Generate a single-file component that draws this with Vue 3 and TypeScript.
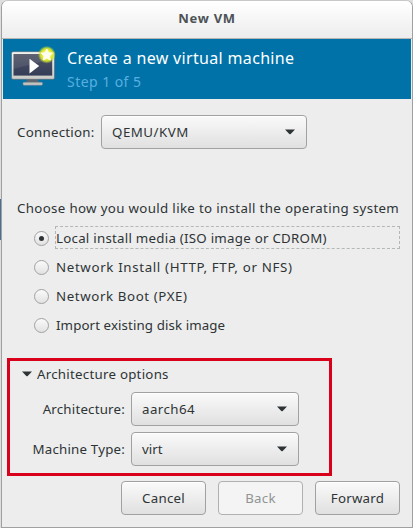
<template>
    <div class="desktop">
        <div class="window">
            <div class="titlebar"><span class="window-title">New VM</span></div>
            <div class="banner">
                <svg class="banner-icon" width="46" height="44" viewBox="0 0 46 44">
                    <defs>
                        <linearGradient id="screen" x1="0" y1="0" x2="0" y2="1">
                            <stop offset="0" stop-color="#4f5262" />
                            <stop offset="0.5" stop-color="#41475e" />
                            <stop offset="1" stop-color="#343c57" />
                        </linearGradient>
                        <linearGradient id="frame" x1="0" y1="0" x2="0" y2="1">
                            <stop offset="0" stop-color="#f4f4f0" />
                            <stop offset="1" stop-color="#c9c9c6" />
                        </linearGradient>
                        <radialGradient id="glow">
                            <stop offset="0.45" stop-color="#f4f53c" />
                            <stop offset="0.72" stop-color="#d6e62c" stop-opacity="0.9" />
                            <stop offset="1" stop-color="#a8cf30" stop-opacity="0" />
                        </radialGradient>
                    </defs>
                    <path d="M17 35h11l1 4H16z" fill="#5d6670" />
                    <rect x="13" y="38.3" width="19.5" height="3" rx="1" fill="#c3c3c0" stroke="#777e83" stroke-width="0.5" />
                    <rect x="1.5" y="7.7" width="43" height="27.6" rx="1.5" fill="url(#frame)" stroke="#58636b" stroke-width="0.6" />
                    <rect x="3.5" y="10" width="38.7" height="21.6" fill="url(#screen)" />
                    <path d="M3.5 10h38.7v5L3.500 25z" fill="#fff" opacity="0.09" />
                    <path d="M19.500 14.800v14.600l9.700-7.300z" fill="#fff" />
                    <circle cx="36.8" cy="10.7" r="9" fill="url(#glow)" />
                    <path d="M36.800 5l1.700 3.700 4 .5-3 2.800.8 4-3.500-2-3.500 2 .8-4-3-2.800 4-.5z" fill="#fffff0" stroke="#fffff0" stroke-linejoin="round" />
                </svg>
                <div class="banner-text">
                    <div class="banner-title">Create a new virtual machine</div>
                    <div class="banner-step">Step 1 of 5</div>
                </div>
            </div>

            <div class="content">
                <div class="connection">
                    <span class="label label-connection">Connection:</span>
                    <button class="combo combo-wide">
                        <span class="caps">QEMU/KVM</span>
                        <svg width="10" height="6" viewBox="0 0 10 6"><path d="M0 .5h10L5.700 5q-.7.700-1.400 0z" fill="#2e3436" /></svg>
                    </button>
                </div>

                <div class="question">Choose how you would like to install the operating system</div>
                <div class="methods">
                    <div
                        v-for="(item, index) in methods"
                        :key="item.key"
                        class="method"
                        @click="selected = index"
                    >
                        <span class="radio" :class="{ checked: selected === index }"></span>
                        <span class="method-label" :class="[item.key, { focused: selected === index }]">{{ item.label }}</span>
                    </div>
                </div>
            </div>

            <div class="arch">
                <div class="expander" @click="expanded = !expanded">
                    <svg width="10" height="6" viewBox="0 0 10 6"><path d="M0 .5h10L5.700 5q-.7.700-1.400 0z" fill="#2e3436" /></svg>
                    <span class="expander-label">Architecture options</span>
                </div>
                <template v-if="expanded">
                    <div v-for="row in archRows" :key="row.value" class="arch-row">
                        <span class="label arch-label">{{ row.label }}</span>
                        <button class="combo">
                            <span :class="row.value">{{ row.value }}</span>
                            <svg width="10" height="6" viewBox="0 0 10 6"><path d="M0 .5h10L5.700 5q-.7.700-1.400 0z" fill="#2e3436" /></svg>
                        </button>
                    </div>
                </template>
            </div>

            <div class="actions">
                <button class="btn">Cancel</button>
                <button class="btn" disabled>Back</button>
                <button class="btn">Forward</button>
            </div>
        </div>
    </div>
</template>

<script lang="ts" setup>
import { ref } from 'vue';

interface Method {
    key: string
    label: string
}

const methods: Method[] = [
    { key: 'local', label: 'Local install media (ISO image or CDROM)' },
    { key: 'network', label: 'Network Install (HTTP, FTP, or NFS)' },
    { key: 'pxe', label: 'Network Boot (PXE)' },
    { key: 'import', label: 'Import existing disk image' },
];

const archRows = [
    { label: 'Architecture:', value: 'aarch64' },
    { label: 'Machine Type:', value: 'virt' },
];

const selected = ref(0);
const expanded = ref(true);
</script>

<style>
body {
    background: #fff;
}
</style>

<style scoped>
.desktop {
    box-sizing: border-box;
    width: 413px;
    height: 528px;
    padding-left: 1px;
    background: linear-gradient(#dedede 0 199px, #4b6f99 199px 240px, #dedede 240px);
}

.window {
    box-sizing: border-box;
    width: 412px;
    height: 528px;
    border: 1px solid #a0a0a0;
    border-top-color: #c8c8c8;
    border-radius: 7px 7px 0 0;
    background: #ededed;
    overflow: hidden;
    color: #2e3436;
    font-family: "Noto Sans", "Open Sans", sans-serif;
    font-size: 13.3px;
    line-height: 20px;
    letter-spacing: 0.25px;
    white-space: nowrap;
}

.titlebar {
    box-sizing: border-box;
    height: 38px;
    padding-top: 7px;
    border-bottom: 1px solid #b5b5b5;
    background: linear-gradient(#fff, #ededed);
    text-align: center;
}

.window-title {
    color: #4d5356;
    font-size: 13px;
    font-weight: 700;
    letter-spacing: 0.7px;
}

.banner {
    box-sizing: border-box;
    display: flex;
    height: 60px;
    margin: 0 1px;
    padding: 5px 0 0 7px;
    background: #0072a8;
}

.banner-text {
    padding: 2px 0 0 11px;
}

.banner-title {
    height: 24px;
    color: #fff;
    font-size: 16px;
    line-height: 24px;
    letter-spacing: 0.33px;
}

.banner-step {
    color: #59afe0;
    font-size: 14px;
    line-height: 24px;
    letter-spacing: 0.45px;
}

.content {
    height: 259px;
    padding: 16px 12px 0 15px;
    box-sizing: border-box;
}

.connection {
    display: flex;
    align-items: center;
}

.label-connection {
    width: 84px;
}

button {
    box-sizing: border-box;
    height: 34px;
    margin: 0;
    border: 1px solid #a1a1a1;
    border-radius: 4px;
    background: linear-gradient(#fafafa, #e0e0e0);
    box-shadow: inset 0 1px #fff;
    color: #2e3436;
    font: inherit;
    letter-spacing: inherit;
}

.combo {
    display: flex;
    align-items: center;
    justify-content: space-between;
    width: 168px;
    padding: 0 11px 0 10px;
}

.combo-wide {
    width: 206px;
}

.caps {
    letter-spacing: 0.5px;
}

.aarch64 {
    letter-spacing: 0.45px;
}

.virt {
    letter-spacing: 0;
}

.question {
    margin-top: 49px;
    letter-spacing: 0.34px;
}

.methods {
    margin-top: 8px;
}

.method {
    display: flex;
    align-items: center;
    height: 23px;
    margin-bottom: 6px;
    padding-left: 17px;
}

.radio {
    box-sizing: border-box;
    display: flex;
    align-items: center;
    justify-content: center;
    flex: none;
    width: 15px;
    height: 15px;
    margin-top: 1px;
    border: 1px solid #a1a1a1;
    border-radius: 50%;
    background: linear-gradient(#fafafa, #e2e2e2);
}

.radio.checked::after {
    content: "";
    width: 5px;
    height: 5px;
    border-radius: 50%;
    background: #2e3436;
}

.method-label {
    box-sizing: border-box;
    flex: 1;
    height: 23px;
    margin-left: 6px;
    border: 1px dashed transparent;
    line-height: 22px;
}

.method-label.network {
    letter-spacing: 0.65px;
}

.method-label.pxe {
    letter-spacing: 0.6px;
}

.method-label.import {
    letter-spacing: 0.1px;
}

.method-label.focused {
    border-color: #b4b7b8;
}

.arch {
    box-sizing: border-box;
    width: 325px;
    height: 118px;
    margin-left: 5px;
    padding: 3px 0 0 12px;
    border: 3px solid #d9001b;
}

.expander {
    display: flex;
    align-items: center;
    height: 20px;
    margin-bottom: 8px;
}

.expander-label {
    margin-left: 5px;
}

.arch-row {
    display: flex;
    align-items: center;
    margin-bottom: 6px;
}

.arch-label {
    width: 103px;
    margin-right: 6px;
    letter-spacing: 0.2px;
    text-align: right;
}

.actions {
    display: flex;
    justify-content: flex-end;
    gap: 12px;
    padding: 5px 12px 0 0;
}

.btn {
    width: 85px;
    padding: 0;
}

.btn:disabled {
    border-color: #b0b0b0;
    background: #f4f4f4;
    box-shadow: none;
    color: #909494;
}
</style>
